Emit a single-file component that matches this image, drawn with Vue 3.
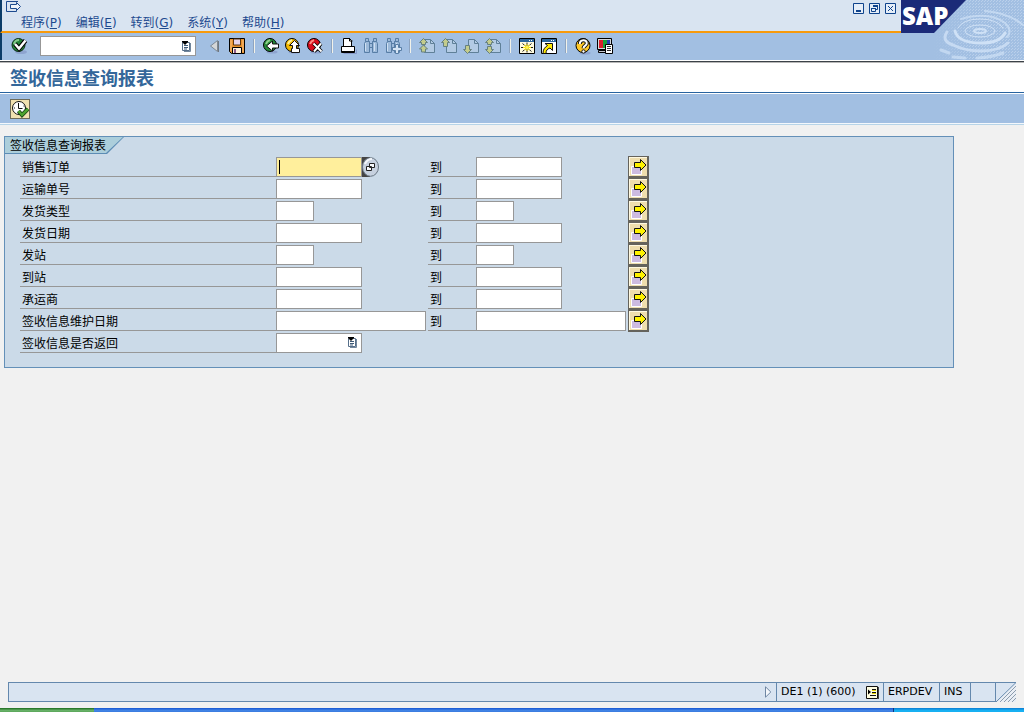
<script setup>
import { ref } from 'vue'

const menus = [
  { text: '程序', key: 'P' },
  { text: '编辑', key: 'E' },
  { text: '转到', key: 'G' },
  { text: '系统', key: 'Y' },
  { text: '帮助', key: 'H' },
]

const page = (x) =>
  `<path d="M${x} 3.500h6l4 4v9h-10z" fill="#b3cbe4" stroke="#5f8098"/><path d="M${x + 6} 3.500v4h4" fill="none" stroke="#5f8098"/>`
const arrowFill = 'fill="#c3cc8c" stroke="#66807e" stroke-width="1"'
const ball = (color, light) =>
  `<ellipse cx="11" cy="16" rx="5.500" ry="1.500" fill="#8598c8" opacity=".7"/><circle cx="9" cy="9" r="6.500" fill="${color}" stroke="#000"/><path d="M5 8q1-3 4-4" fill="none" stroke="${light}" stroke-width="2"/>`
const glass =
  '<path d="M4.500 2.500h3v3h1v2h3v-2h1v-3h3v3l1 2v9h-5v-5h-3v5h-5v-9l1-2z" fill="#9dbada" stroke="#587ea6"/><path d="M4.500 7v8M13.500 7v8" stroke="#cfe0f2"/><path d="M4.500 5.500h4M11.500 5.500h4M8.500 7v5M11.500 7v5" stroke="#587ea6"/>'

const icons = {
  save: '<path d="M2.500 2.500h15v15h-13l-2-2z" fill="#e8912c" stroke="#000"/><path d="M6.500 3h7v6h-7z" fill="#e3d3ea" stroke="#5b3510"/><path d="M5.500 11.500h9v6h-9z" fill="#fff1dc" stroke="#000"/><path d="M7 13h2v4h-2z" fill="#8a5a8a"/><path d="M4 4v11M16 4v12" stroke="#f7c184"/>',
  back: ball('#258a38', '#8fd08a') + '<path d="M5.500 10l6-5v3h6v4h-6v3z" fill="#fff" stroke="#111"/>',
  exit: ball('#f2b800', '#fff29a') + '<path d="M11.500 4.500l5 5h-3v3h3v4h-8v-4h1v-3h-3z" fill="#fff" stroke="#111"/>',
  cancel: ball('#d80c1c', '#ff8b82') + '<path d="M8.500 7.500l8 8M16 7.500l-7 8" stroke="#000" stroke-width="3.500"/><path d="M8.500 7.500l8 8M16 7.500l-7 8" stroke="#fff" stroke-width="2"/>',
  print: '<path d="M4.500 17.500h13v-4" fill="none" stroke="#8598c8"/><path d="M4.500 2.500h6l2 2v7h-8z" fill="#fff" stroke="#000"/><path d="M2.500 10.500h13v6h-13z" fill="#fff" stroke="#000"/><path d="M3 15.500h12" stroke="#000"/><path d="M10.500 2v3h3" fill="none" stroke="#000"/>',
  find: glass,
  findNext: glass + '<path d="M12.500 8.500h3v3h3v3h-3v3h-3v-3h-3v-3h3z" fill="#d5e4f4" stroke="#587ea6"/>',
  first: page(7.5) + `<path d="M6.500 2.500l4 4h-2v2h-4v-2h-2zM6.500 9l4 4h-2v3h-4v-3h-2z" ${arrowFill}/>`,
  prev: page(7.5) + `<path d="M6.500 2.500l4 4h-2v4h-4v-4h-2z" ${arrowFill}/>`,
  next: page(7.5) + `<path d="M6.500 17.500l4-4h-2v-4h-4v4h-2z" ${arrowFill}/>`,
  last: page(7.5) + `<path d="M6.500 2.500l4 4h-2v2h-4v-2h-2zM6.500 17.500l4-4h-2v-3h-4v3h-2z" ${arrowFill}/>`,
  session: '<path d="M2.500 2.500h15v15h-15z" fill="#fffbe0" stroke="#000"/><path d="M3 3h14v3h-14z" fill="#2d679d"/><path d="M12 4.500h4" stroke="#fff" stroke-dasharray="1 1"/><path d="M10 6.500v10M4 11.500h12M5.500 7.500l9 8M14.500 7.500l-9 8" stroke="#222"/><path d="M10 8v7M6 11.500h8M7 9l6 5M13 9l-6 5" stroke="#ffe800"/><path d="M8.500 10h3v3h-3z" fill="#fff34a"/>',
  shortcut: '<path d="M2.500 2.500h15v15h-15z" fill="#fff" stroke="#000"/><path d="M3 3h14v3h-14z" fill="#2d679d"/><path d="M12 4.500h4" stroke="#fff" stroke-dasharray="1 1"/><path d="M6 7.500h7.500v7l-2.500-2.500c-3 1-4 2.500-4 5.500h-3c0-4 1.500-6 4.500-8z" fill="#ffe800" stroke="#111"/>',
  help: '<ellipse cx="12" cy="17" rx="5.500" ry="1.500" fill="#8598c8" opacity=".7"/><circle cx="10" cy="9.500" r="7" fill="#ffc928" stroke="#000"/><path d="M6.800 8c0-5 7-5 7-.800 0 2.500-3.300 2.300-3.300 5" fill="none" stroke="#111" stroke-width="4"/><path d="M6.800 8c0-5 7-5 7-.800 0 2.500-3.300 2.300-3.300 5" fill="none" stroke="#fff" stroke-width="2"/><circle cx="10.500" cy="15.500" r="1.700" fill="#fff" stroke="#111"/>',
  layout: '<path d="M2.500 2.500h14v11h-14z" fill="#d6d8dc" stroke="#000"/><path d="M4 4h4v8h-4z" fill="#d81e2c"/><path d="M8 4h4v8h-4z" fill="#17a03a"/><path d="M12 4h3v8h-3z" fill="#253db0"/><path d="M3.500 14.500h8v2h-8z" fill="#c7c9cf" stroke="#000"/><path d="M10.500 8.500h7v9h-7z" fill="#fff" stroke="#000"/><path d="M12 10.500h4M12 12.500h4M12 14.500h4" stroke="#333"/>',
}

const groups = [
  [['save', '保存']],
  [['back', '返回'], ['exit', '退出'], ['cancel', '取消']],
  [['print', '打印'], ['find', '查找'], ['findNext', '查找下一个']],
  [['first', '第一页'], ['prev', '上一页'], ['next', '下一页'], ['last', '最后一页']],
  [['session', '创建新会话'], ['shortcut', '创建快捷方式']],
  [['help', '帮助'], ['layout', '定制本地布局']],
]

const listIcon =
  '<path d="M.5 1.500h7v8h-7z" fill="#fff" stroke="#566f8a"/><path d="M8.500 2v8.500H2" fill="none" stroke="#71869c"/><path d="M0 0h6v1L3 4 0 1z" fill="#000"/><path d="M2 4.500h4M2 6.500h4M2 8h3" stroke="#3f5b78"/>'

const rows = ref([
  { label: '销售订单', size: 'medium', from: '', to: '' },
  { label: '运输单号', size: 'medium', from: '', to: '' },
  { label: '发货类型', size: 'small', from: '', to: '' },
  { label: '发货日期', size: 'medium', from: '', to: '' },
  { label: '发站', size: 'small', from: '', to: '' },
  { label: '到站', size: 'medium', from: '', to: '' },
  { label: '承运商', size: 'medium', from: '', to: '' },
  { label: '签收信息维护日期', size: 'large', from: '', to: '' },
])
const command = ref('')
</script>

<template>
  <div class="window">
    <header class="top">
      <div class="menu-area">
        <div class="caption">
          <svg class="sys" width="16" height="14" viewBox="0 0 16 14" fill="none" stroke="#1d4a8f">
            <path d="M12 1.500H.500v10h10v-2" />
            <path d="M4.500 4.500h6v-2l4 4-4 4v-2h-6z" fill="#eef4fb" />
          </svg>
          <div class="win-buttons">
            <button aria-label="最小化">
              <svg width="11" height="11" viewBox="0 0 11 11"><path d="M.5.500h10v10H.500z" fill="#e6eef8" stroke="#0f438c" /><path d="M3 7h5v2H3z" fill="#0f438c" /></svg>
            </button>
            <button aria-label="还原">
              <svg width="11" height="11" viewBox="0 0 11 11"><path d="M.5.500h10v10H.500z" fill="#e6eef8" stroke="#0f438c" /><path d="M4.500 3h4v3.500H7M2.500 5.500h4v3h-4z" fill="none" stroke="#0f438c" /><path d="M4 2h5v2H4zM2 5h5v1H2z" fill="#0f438c" /></svg>
            </button>
            <button aria-label="关闭">
              <svg width="11" height="11" viewBox="0 0 11 11"><path d="M.5.500h10v10H.500z" fill="#e6eef8" stroke="#0f438c" /><path d="M3 3l5 5M8 3l-5 5" stroke="#0f438c" /></svg>
            </button>
          </div>
        </div>
        <nav class="menus">
          <a v-for="m in menus" :key="m.key" href="#">{{ m.text }}(<u>{{ m.key }}</u>)</a>
        </nav>
      </div>

      <div class="toolbar">
        <button class="tool" aria-label="输入">
          <svg width="20" height="20" viewBox="0 0 20 20">
            <ellipse cx="12" cy="16" rx="6" ry="2" fill="#8598c8" opacity=".7" />
            <circle cx="9.500" cy="9" r="6.500" fill="#25843a" stroke="#0c2c16" />
            <path d="M5 8q1-4 5-4" stroke="#86c98b" stroke-width="2" fill="none" />
            <path d="M6 8l4 4.500 6.500-8" stroke="#000" stroke-width="4.500" fill="none" />
            <path d="M6 8l4 4.500 6.500-8" stroke="#fff" stroke-width="2.500" fill="none" />
          </svg>
        </button>
        <div class="command">
          <input v-model="command" type="text" aria-label="命令" />
          <button aria-label="命令历史">
            <svg width="10" height="11" viewBox="0 0 10 11" v-html="listIcon"></svg>
          </button>
        </div>
        <button class="tool hide" aria-label="隐藏">
          <svg width="20" height="20" viewBox="0 0 20 20"><path d="M12.500 4.500v11L5.500 10z" fill="#d4d6d8" stroke="#7c8894" /><path d="M13.500 5v11" stroke="#6f7780" /></svg>
        </button>
        <template v-for="(g, i) in groups" :key="i">
          <span v-if="i" class="sep"></span>
          <button v-for="t in g" :key="t[0]" class="tool" :aria-label="t[1]">
            <svg width="20" height="20" viewBox="0 0 20 20" v-html="icons[t[0]]"></svg>
          </button>
        </template>
      </div>

      <svg class="brand" width="123" height="60" viewBox="0 0 123 60">
        <defs>
          <linearGradient id="haze" x1="0" x2="1"><stop offset=".25" stop-color="#fff" stop-opacity="0" /><stop offset=".6" stop-color="#fff" stop-opacity=".6" /></linearGradient>
          <pattern id="grain" width="3" height="3" patternUnits="userSpaceOnUse"><path d="M0 0h1v1H0zM2 1h1v1H2z" fill="#c9dcf2" /></pattern>
          <mask id="fade"><rect width="123" height="60" fill="url(#haze)" /></mask>
        </defs>
        <rect width="123" height="60" fill="#a2bfe2" />
        <path d="M45 18L65 0h58v60H33V35z" fill="url(#grain)" mask="url(#fade)" />
        <g fill="none" stroke="#cfe1f6" stroke-linecap="round">
          <ellipse cx="79" cy="31" rx="6" ry="2" stroke-width="2" />
          <ellipse cx="79" cy="31" rx="15" ry="6" stroke-width="1" />
          <path d="M57 28q5-9 22-9 17 0 23 9" stroke-width="1" />
          <path d="M54 31q3 12 26 12 19 0 24-10" stroke-width="3" />
          <path d="M46 32q-6 9 6 13 12 6 28 6 18 0 27-8" stroke-width="3" opacity=".8" />
          <path d="M60 19q28-8 44 4 8 8 2 14M84 11q24 2 38 14" stroke-width="2" opacity=".7" />
          <path d="M40 50l8 3M52 57l12 1M76 58q16-1 26-5" stroke-width="3" opacity=".7" />
        </g>
        <path d="M0 0h65L33 33H0z" fill="#1b2a78" />
        <text x="1" y="25" class="brand-text">SAP</text>
      </svg>
    </header>

    <h1>签收信息查询报表</h1>

    <div class="app-bar">
      <button aria-label="执行">
        <svg width="18" height="18" viewBox="0 0 18 18">
          <circle cx="8" cy="8" r="6.500" fill="#fff" stroke="#111" />
          <path d="M7.500 3v5.500h4" fill="none" stroke="#111" />
          <path d="M3 8h1M8 12.500v1M12.500 6h1" stroke="#111" />
          <path d="M7.500 11l3.500 4 6-6" stroke="#123d12" stroke-width="4" fill="none" />
          <path d="M7.500 11l3.500 4 6-6" stroke="#4da32e" stroke-width="2.500" fill="none" />
        </svg>
      </button>
    </div>

    <main>
      <section class="panel">
        <h2>签收信息查询报表</h2>
        <form @submit.prevent>
          <div v-for="(r, i) in rows" :key="r.label" class="row">
            <label class="name" :for="'from' + i">{{ r.label }}</label>
            <div class="cell">
              <input :id="'from' + i" v-model="r.from" type="text" :class="[r.size, { active: i === 0 }]" />
              <span v-if="i === 0" class="caret"></span>
              <button v-if="i === 0" type="button" class="match" aria-label="搜索帮助">
                <svg width="17" height="20" viewBox="0 0 17 20">
                  <path d="M0 0h8v20H0z" fill="#444" />
                  <ellipse cx="8.500" cy="10" rx="8" ry="9.300" fill="#c7d1df" stroke="#687582" />
                  <path d="M3 7q2-5 7-5" stroke="#f3f6fa" stroke-width="2" fill="none" />
                  <path d="M7.500 6.500h5v4h-5zM4.500 9.500h5v4h-5z" fill="#f7f9fc" stroke="#222" />
                </svg>
              </button>
            </div>
            <label class="name" :for="'to' + i">到</label>
            <div class="cell">
              <input :id="'to' + i" v-model="r.to" type="text" :class="r.size" />
            </div>
            <button type="button" class="multi" aria-label="多项选择">
              <svg width="18" height="18" viewBox="0 0 18 18">
                <path d="M2.500 8.500h10v8h-10z" fill="#cdbbe0" stroke="#fff" />
                <path d="M5.500 4.500h6v-3l5.500 5.500-5.500 5.500v-3h-6z" fill="#fff200" stroke="#111" />
              </svg>
            </button>
          </div>
          <div class="row">
            <label class="name" for="returned">签收信息是否返回</label>
            <div class="cell">
              <select id="returned" class="medium"><option></option></select>
              <svg class="drop" width="10" height="11" viewBox="0 0 10 11" v-html="listIcon"></svg>
            </div>
          </div>
        </form>
      </section>
    </main>

    <footer class="status">
      <div class="message">
        <svg width="8" height="12" viewBox="0 0 8 12"><path d="M1.500.800v10.400L6.800 6z" fill="#f4f7fb" stroke="#6f86a3" /></svg>
      </div>
      <div class="system">
        <span>DE1 (1) (600)</span>
        <svg width="13" height="13" viewBox="0 0 13 13"><path d="M.5.500h11v12H.500z" fill="#fffde0" stroke="#111" /><path d="M12.500 1v12" stroke="#444" /><path d="M2 3.500l3 2.500-3 2.500z" fill="#000" /><path d="M6 3.500h4M6 6.500h4M4 9.500h6" stroke="#111" /><path d="M6 4.500h4M6 7.500h4" stroke="#ecd800" /></svg>
      </div>
      <div class="server">ERPDEV</div>
      <div class="mode">INS</div>
      <div class="blank"></div>
      <svg class="grip" width="20" height="20" viewBox="0 0 20 20">
        <path d="M19.500 0L0 19.500V20h20V0z" fill="#e9eef5" />
        <path d="M0 0h20L0 20z" fill="#d9e4f1" />
        <path d="M0 .500h20L0 20" fill="none" stroke="#6488ad" />
        <path d="M20 4L4 20M20 8L8 20M20 12L12 20M20 16l-4 4" stroke="#8c9cad" />
      </svg>
    </footer>
    <div class="taskbar"><span class="start"></span><span class="tray"></span></div>
  </div>
</template>

<style>
body {
  background: #f1f1f1;
}
</style>

<style scoped>
.window {
  display: flex;
  flex-direction: column;
  min-height: 100vh;
  font: 12px/16px "DejaVu Sans", "Noto Sans CJK SC", sans-serif;
  color: #000;
}
button {
  padding: 0;
  border: 0;
  background: none;
  display: block;
}
svg {
  display: block;
}
input,
select {
  box-sizing: border-box;
  margin: 0;
  border: 1px solid #979797;
  border-radius: 0;
  background: #fff;
  padding: 0 2px;
  font: inherit;
  outline: 0;
}
.top {
  display: grid;
  grid-template-columns: 1fr 123px;
  grid-template-rows: auto auto;
  background: #a2bfe2;
  border-bottom: 1px solid #fff;
}
.menu-area {
  background: #d9e4f1;
  border-left: 2px solid #0b3c68;
  border-bottom: 2px solid #f79a0c;
}
.caption {
  display: flex;
  justify-content: space-between;
  height: 14px;
  padding: 0 5px 0 4px;
}
.win-buttons {
  display: flex;
  gap: 5px;
  padding-top: 2px;
}
.menus {
  display: flex;
  gap: 14px;
  height: 16px;
  padding: 1px 0 0 19px;
}
.menus a {
  color: #1d4a8f;
  text-decoration: none;
}
.toolbar {
  display: flex;
  align-items: center;
  height: 26px;
  border-left: 2px solid #0b3c68;
  padding: 0 0 1px 6px;
}
.tool {
  width: 22px;
  height: 20px;
  padding: 0 1px;
}
.command {
  display: flex;
  box-sizing: border-box;
  width: 156px;
  height: 20px;
  margin-left: 10px;
  border: 1px solid #979797;
  background: #fff;
}
.command input {
  flex: 1;
  min-width: 0;
  border: 0;
}
.command button {
  padding-right: 3px;
}
.hide {
  margin-left: 8px;
}
.sep {
  width: 2px;
  height: 14px;
  margin: 0 5px;
  box-sizing: border-box;
  border-left: 1px solid #8ea4c0;
  border-right: 1px solid #f2f2ea;
}
.brand {
  grid-column: 2;
  grid-row: 1 / 3;
}
.brand-text {
  font: 800 24px "Open Sans", "Noto Sans", sans-serif;
  fill: #fff;
}
h1 {
  margin: 0;
  padding: 1px 10px 0;
  border-top: 1px solid #3c4248;
  border-bottom: 1px solid #28639f;
  box-shadow: inset 0 1px #b8b8b8;
  background: #fff;
  color: #34679a;
  font: bold 18px/29px "Noto Sans CJK SC", sans-serif;
}
.app-bar {
  padding: 5px 10px 4px;
  border-top: 1px solid #fff;
  border-bottom: 1px solid #b7d4e8;
  box-shadow: inset 0 -1px #f4f8fc;
  background: #a2bfe2;
}
.app-bar button {
  width: 20px;
  height: 20px;
  margin-bottom: 1px;
  border: 1px solid #6e6b58;
  background: #f1e1b0;
}
main {
  flex: 1;
  padding: 11px 70px 0 4px;
}
.panel {
  border: 1px solid #6490b8;
  background: #cbdae8;
  padding-bottom: 13px;
}
h2 {
  position: relative;
  isolation: isolate;
  width: max-content;
  margin: 0;
  padding: 1px 18px 0 5px;
  background: #5c8cb4;
  font: inherit;
  clip-path: polygon(0 0, 100% 0, calc(100% - 17px) 100%, 0 100%);
}
h2::before {
  content: "";
  position: absolute;
  inset: 0 1px 1px 0;
  z-index: -1;
  background: #accedb;
  clip-path: polygon(0 0, 100% 0, calc(100% - 17px) 100%, 0 100%);
}
form {
  padding: 2px 0 0 15px;
}
.row {
  display: grid;
  grid-template-columns: 256px 152px 48px 152px 21px;
  height: 22px;
}
.name {
  box-sizing: border-box;
  height: 21px;
  padding: 4px 2px 0;
  border-bottom: 1px solid #979797;
}
.cell {
  position: relative;
  display: flex;
  align-items: start;
  padding-top: 1px;
}
.cell input,
.cell select {
  height: 20px;
}
.small {
  width: 38px;
}
.medium {
  width: 86px;
}
.large {
  width: 150px;
}
.cell .active {
  background: #ffef9c;
}
.caret {
  position: absolute;
  left: 3px;
  top: 4px;
  width: 1px;
  height: 14px;
  background: #000;
}
.cell select {
  appearance: none;
}
.drop {
  position: absolute;
  left: 72px;
  top: 5px;
  pointer-events: none;
}
.multi {
  box-sizing: border-box;
  width: 21px;
  height: 22px;
  border: 1px solid #65635c;
  border-right-width: 2px;
  border-bottom-width: 2px;
  background: #efdeae;
  box-shadow: inset 1px 1px #fff8e0;
}
.status {
  display: flex;
  height: 20px;
  margin: 0 8px 6px;
  font-size: 11px;
  line-height: 18px;
}
.status div {
  box-sizing: border-box;
  border: 1px solid #6488ad;
  border-right: 0;
  background: #d9e4f1;
  display: flex;
  align-items: center;
  padding: 0 0 0 4px;
}
.status .message {
  flex: 1;
  justify-content: flex-end;
  padding-right: 4px;
}
.status .system {
  width: 107px;
  justify-content: space-between;
  padding-right: 4px;
}
.server {
  width: 56px;
}
.mode {
  width: 31px;
}
.status .blank {
  width: 26px;
  border-right: 1px solid #6488ad;
}
.taskbar {
  display: flex;
  justify-content: space-between;
  height: 4px;
  background: linear-gradient(#1f5fd6 1px, #4486e6 2px, #3a7be0);
}
.start {
  width: 94px;
  background: linear-gradient(#2c7a2c 1px, #6cb46c 2px, #5aa65a);
}
.tray {
  width: 130px;
  border-left: 1px solid #12357e;
  background: linear-gradient(#0e86d8 1px, #18b0f2 2px);
}
</style>
